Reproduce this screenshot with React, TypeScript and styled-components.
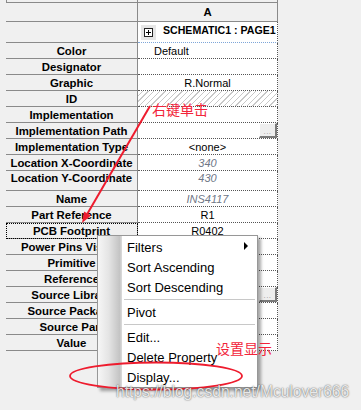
import styled, { createGlobalStyle } from "styled-components";

const GlobalStyle = createGlobalStyle`
  html, body {
    margin: 0;
    padding: 0;
    background: #f0f0f0;
  }
`;

const Page = styled.div`
  position: relative;
  width: 361px;
  height: 410px;
  overflow: hidden;
  background: #f0f0f0;
  font-family: "Liberation Sans", Arial, sans-serif;
`;

const Sheet = styled.div`
  display: flex;
  flex-direction: column;
  padding-left: 6px;
  width: 272px;
`;

const Row = styled.div<{ $h: number }>`
  display: grid;
  grid-template-columns: 132px 140px;
  height: ${({ $h }) => $h}px;
`;

const LabelCell = styled.div<{ $top?: boolean; $focus?: boolean }>`
  box-sizing: border-box;
  display: flex;
  align-items: ${({ $top }) => ($top ? "flex-start" : "center")};
  justify-content: center;
  border-right: 1px solid #8a8a8a;
  border-bottom: 1px solid #8a8a8a;
  font-size: 11.4px;
  font-weight: bold;
  color: #000;
  white-space: nowrap;
  overflow: hidden;
  padding-top: ${({ $top }) => ($top ? "1px" : "0")};
  outline: ${({ $focus }) => ($focus ? "1px dotted #000" : "none")};
  outline-offset: -1px;
`;

const HeaderCell = styled.div`
  box-sizing: border-box;
  display: flex;
  align-items: center;
  justify-content: center;
  border-right: 1px solid #8a8a8a;
  border-bottom: 1px solid #8a8a8a;
  font-size: 11.4px;
  font-weight: bold;
  color: #000;
`;

const TopStub = styled.div`
  box-sizing: border-box;
  border-bottom: 1px solid #8a8a8a;
  border-right: 1px solid #8a8a8a;
`;

const TopStubLeft = styled(TopStub)`
  border-left: 1px solid #8a8a8a;
`;

const ValueCell = styled.div<{
  $align?: "left" | "center";
  $muted?: boolean;
  $hatch?: boolean;
  $top?: boolean;
  $blue?: boolean;
}>`
  box-sizing: border-box;
  display: flex;
  align-items: ${({ $top }) => ($top ? "flex-start" : "center")};
  justify-content: ${({ $align }) => ($align === "left" ? "flex-start" : "center")};
  padding-left: ${({ $align }) => ($align === "left" ? "16px" : "0")};
  padding-top: ${({ $top }) => ($top ? "1px" : "0")};
  background: ${({ $hatch }) =>
    $hatch
      ? "repeating-linear-gradient(135deg, #ffffff 0px, #ffffff 3px, #c8c8c8 3px, #c8c8c8 4px)"
      : "#ffffff"};
  border-right: 1px dotted #555;
  border-bottom: 1px dotted ${({ $blue }) => ($blue ? "#7ea6d8" : "#555")};
  font-size: 11px;
  color: ${({ $muted }) => ($muted ? "#6f7787" : "#000")};
  font-style: ${({ $muted }) => ($muted ? "italic" : "normal")};
  white-space: nowrap;
  overflow: hidden;
  position: relative;
`;

const ButtonCell = styled(ValueCell)`
  justify-content: flex-end;
  align-items: flex-start;
`;

const EllipsisButton = styled.div`
  box-sizing: border-box;
  width: 18px;
  height: 15px;
  background: #eeeeee;
  border-top: 1px solid #ffffff;
  border-left: 1px solid #ffffff;
  border-right: 2px solid #7a7a7a;
  border-bottom: 2px solid #7a7a7a;
  font-size: 8px;
  line-height: 8px;
  color: #9a9a9a;
  text-align: center;
  display: flex;
  align-items: flex-end;
  justify-content: center;
  letter-spacing: 0.5px;
`;

const GroupCell = styled(ValueCell)`
  align-items: flex-start;
  justify-content: flex-start;
  padding-left: 3px;
  padding-top: 3px;
  gap: 7px;
`;

const Expander = styled.div`
  width: 15px;
  height: 15px;
  background: #e6e6e6;
  display: flex;
  align-items: center;
  justify-content: center;
  flex-shrink: 0;
`;

const PlusBox = styled.div`
  box-sizing: border-box;
  width: 9px;
  height: 9px;
  border: 1px solid #222;
  background: #fff;
  position: relative;

  &::before {
    content: "";
    position: absolute;
    left: 1px;
    top: 3px;
    width: 5px;
    height: 1px;
    background: #000;
  }
  &::after {
    content: "";
    position: absolute;
    left: 3px;
    top: 1px;
    width: 1px;
    height: 5px;
    background: #000;
  }
`;

const GroupTitle = styled.span`
  font-weight: bold;
  font-size: 10.6px;
  color: #000;
  line-height: 11px;
`;

const Menu = styled.div`
  position: absolute;
  left: 97px;
  top: 235px;
  width: 161px;
  box-sizing: border-box;
  background: #ffffff;
  border: 1px solid #979797;
  box-shadow: 3px 3px 3px rgba(0, 0, 0, 0.35);
  padding: 1px 0 0 0;
  display: flex;
  flex-direction: column;

  &::before {
    content: "";
    position: absolute;
    left: 0;
    top: 0;
    bottom: 0;
    width: 24px;
    background: linear-gradient(to right, #f6f6f6 0%, #e4e4e4 45%, #c4c4c4 90%, #dcdcdc 100%);
  }
`;

const MenuItem = styled.div`
  position: relative;
  height: 20px;
  display: flex;
  align-items: center;
  padding-left: 29px;
  font-size: 13px;
  color: #000;
  white-space: nowrap;
`;

const SubArrow = styled.span`
  position: absolute;
  right: 9px;
  top: 5px;
  width: 0;
  height: 0;
  border-top: 4px solid transparent;
  border-bottom: 4px solid transparent;
  border-left: 4px solid #000;
`;

const Separator = styled.div`
  height: 5px;
  display: flex;
  align-items: center;
  padding-left: 26px;
  padding-right: 2px;
  position: relative;

  &::after {
    content: "";
    flex: 1;
    height: 1px;
    background: #c8c8c8;
  }
`;

const Note = styled.span<{ $x: number; $y: number }>`
  position: absolute;
  left: ${({ $x }) => $x}px;
  top: ${({ $y }) => $y}px;
  font-family: "Noto Sans CJK SC", "Liberation Sans", sans-serif;
  font-size: 14px;
  line-height: 14px;
  color: #f2243a;
  white-space: nowrap;
`;

const Overlay = styled.svg`
  position: absolute;
  left: 0;
  top: 0;
  pointer-events: none;
`;

const Watermark = styled.span`
  position: absolute;
  left: 116px;
  top: 383px;
  font-family: "Liberation Sans", Arial, sans-serif;
  font-size: 15.6px;
  color: rgba(255, 255, 255, 0.85);
  text-shadow: 0 0 2px rgba(0, 0, 0, 0.45), 0 0 1px rgba(0, 0, 0, 0.4);
  white-space: nowrap;
`;

type Prop = {
  label: string;
  value?: string;
  h?: number;
  align?: "left" | "center";
  muted?: boolean;
  hatch?: boolean;
  button?: boolean;
  focus?: boolean;
  top?: boolean;
};

const props: Prop[] = [
  { label: "Color", value: "Default", align: "left" },
  { label: "Designator" },
  { label: "Graphic", value: "R.Normal" },
  { label: "ID", hatch: true },
  { label: "Implementation" },
  { label: "Implementation Path", button: true },
  { label: "Implementation Type", value: "<none>" },
  { label: "Location X-Coordinate", value: "340", muted: true },
  { label: "Location Y-Coordinate", value: "430", muted: true, h: 20, top: true },
  { label: "Name", value: "INS4117", muted: true },
  { label: "Part Reference", value: "R1" },
  { label: "PCB Footprint", value: "R0402", focus: true },
  { label: "Power Pins Visible" },
  { label: "Primitive" },
  { label: "Reference" },
  { label: "Source Library", button: true },
  { label: "Source Package" },
  { label: "Source Part" },
  { label: "Value" },
];

const menuItems: (string | null)[] = [
  "Filters",
  "Sort Ascending",
  "Sort Descending",
  null,
  "Pivot",
  null,
  "Edit...",
  "Delete Property",
  "Display...",
];

export default function App() {
  // arrow from the note down to the PCB Footprint row
  const tip = { x: 82, y: 223 };
  const start = { x: 150, y: 106 };
  const dx = tip.x - start.x;
  const dy = tip.y - start.y;
  const len = Math.hypot(dx, dy);
  const ux = dx / len;
  const uy = dy / len;
  const bx = tip.x - ux * 11;
  const by = tip.y - uy * 11;
  const head = `${tip.x},${tip.y} ${bx + uy * 4},${by - ux * 4} ${bx - uy * 4},${by + ux * 4}`;

  return (
    <>
      <GlobalStyle />
      <Page>
        <Sheet>
          <Row $h={3}>
            <TopStubLeft />
            <TopStub />
          </Row>
          <Row $h={19}>
            <HeaderCell />
            <HeaderCell>A</HeaderCell>
          </Row>
          <Row $h={21}>
            <LabelCell />
            <GroupCell $blue>
              <Expander>
                <PlusBox />
              </Expander>
              <GroupTitle>SCHEMATIC1 : PAGE1</GroupTitle>
            </GroupCell>
          </Row>
          {props.map(p => (
            <Row key={p.label} $h={p.h ?? 16}>
              <LabelCell $top={p.top} $focus={p.focus}>
                {p.label}
              </LabelCell>
              {p.button ? (
                <ButtonCell>
                  <EllipsisButton>...</EllipsisButton>
                </ButtonCell>
              ) : (
                <ValueCell $align={p.align} $muted={p.muted} $hatch={p.hatch} $top={p.top}>
                  {p.value}
                </ValueCell>
              )}
            </Row>
          ))}
        </Sheet>

        <Menu>
          {menuItems.map((m, i) =>
            m === null ? (
              <Separator key={i} />
            ) : (
              <MenuItem key={i}>
                {m}
                {m === "Filters" && <SubArrow />}
              </MenuItem>
            )
          )}
        </Menu>

        <Note $x={152} $y={102}>右键单击</Note>
        <Note $x={216} $y={341}>设置显示</Note>

        <Overlay width={361} height={410} viewBox="0 0 361 410">
          <line x1={start.x} y1={start.y} x2={bx} y2={by} stroke="#ee1c2e" strokeWidth={2} />
          <polygon points={head} fill="#ee1c2e" />
          <ellipse cx={156} cy={376} rx={86} ry={13.5} fill="none" stroke="#ee1c2e" strokeWidth={1.8} />
        </Overlay>

        <Watermark>https://blog.csdn.net/Mculover666</Watermark>
      </Page>
    </>
  );
}
